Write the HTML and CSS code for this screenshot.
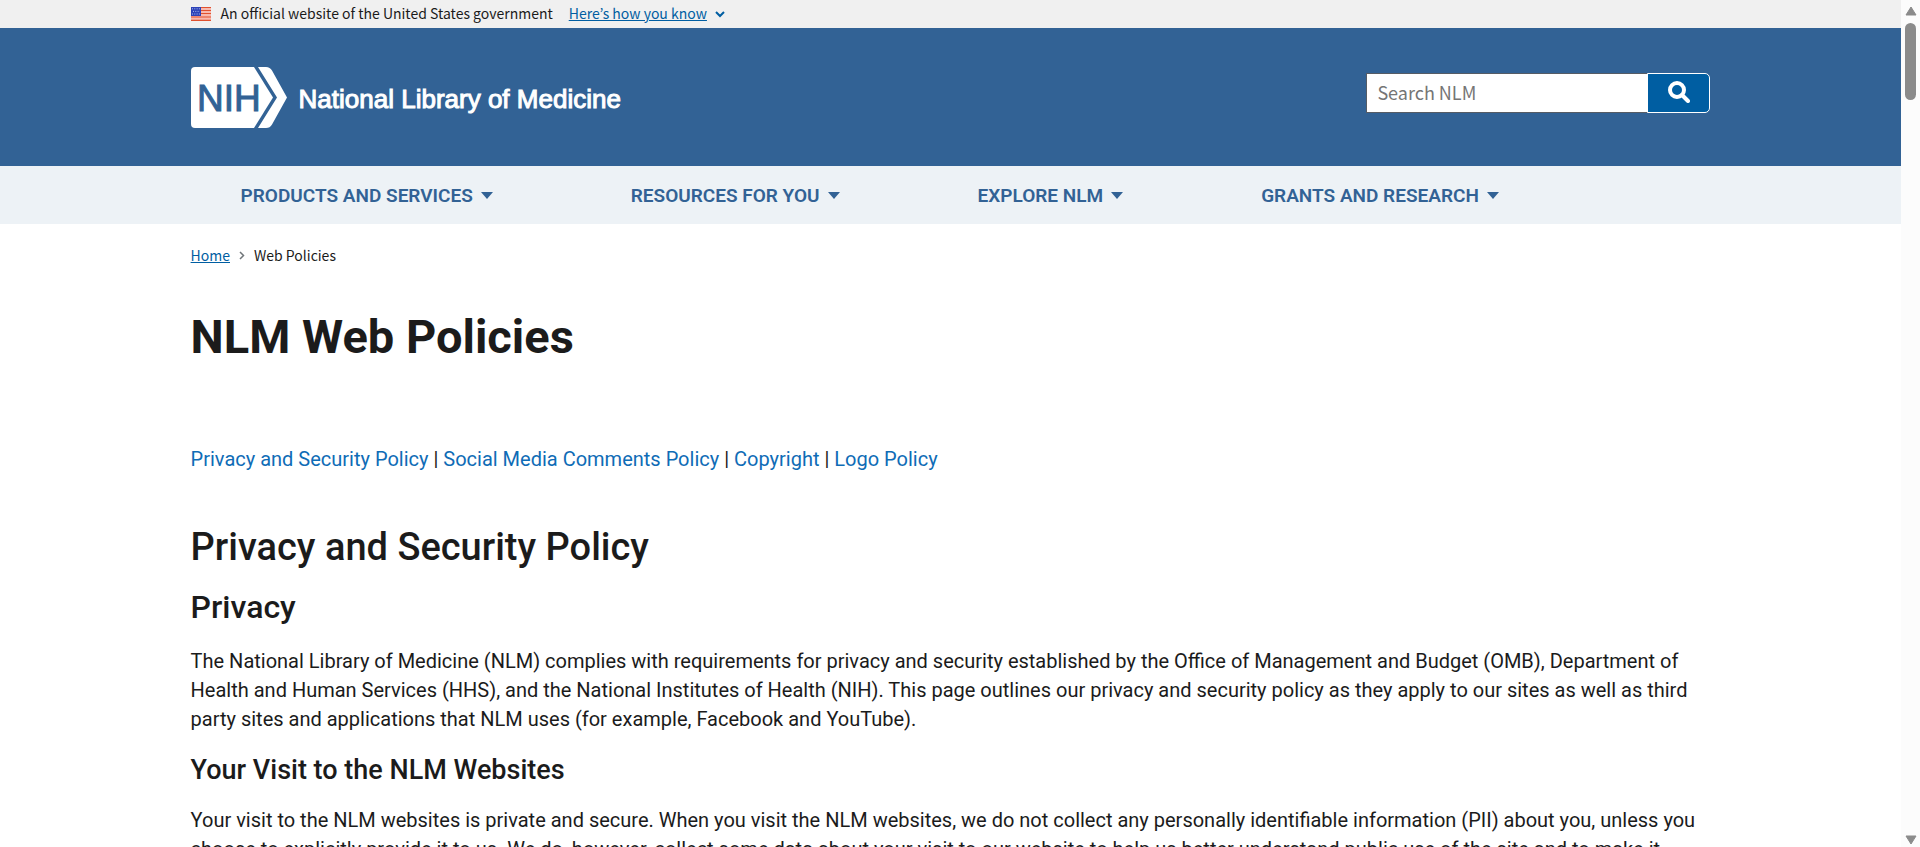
FILE: index.html
```html
<!DOCTYPE html>
<html lang="en">
<head>
<meta charset="utf-8">
<title>NLM Web Policies</title>
<link rel="stylesheet" href="styles.css">
</head>
<body>
<div class="page">
  <section class="gov-banner" aria-label="Official government website">
    <div class="container gov-banner-inner">
      <svg class="flag" viewBox="0 0 20 14" aria-hidden="true">
        <rect width="20" height="14" fill="#f8b9ae"/>
        <path d="M0 .5h20M0 3.5h20M0 6.5h20M0 10h20M0 13.3h20" stroke="#e0512f" stroke-width="1.2"/>
        <rect width="10" height="9" fill="#2d43b8"/>
        <path d="M1 1.8h8M2 4.4h7M1 7h8" stroke="#a9b6ee" stroke-width="1" stroke-dasharray="1 1.3"/>
      </svg>
      <span class="gov-text">An official website of the United States government</span>
      <button type="button" class="gov-toggle"><span class="gov-label">Here’s how you know</span>
        <svg class="chevron" viewBox="0 0 10 7" aria-hidden="true"><path d="M1 1l4 4 4-4"/></svg>
      </button>
    </div>
  </section>

  <header class="header">
    <div class="container header-inner">
      <a class="logo" href="#" aria-label="NIH National Library of Medicine">
        <svg class="logo-mark" viewBox="0 0 98 61" aria-hidden="true">
          <path d="M4 0H63L82 30.500 63 61H4Q0 61 0 57V4Q0 0 4 0Z" fill="#fff"/>
          <path d="M67 0H75Q79 0 81 3.500L96 30.500 81 57.500Q79 61 75 61H67L86 30.500Z" fill="#fff"/>
          <text x="6" y="44" class="logo-nih">NIH</text>
        </svg>
        <span class="logo-name">National Library of Medicine</span>
      </a>
      <form class="search" role="search">
        <input class="search-input" type="search" placeholder="Search NLM" aria-label="Search NLM">
        <button class="search-button" type="submit" aria-label="Search">
          <svg class="search-icon" viewBox="0 0 22 22" aria-hidden="true"><circle cx="9" cy="9" r="7"/><path d="M14 14l6 6"/></svg>
        </button>
      </form>
    </div>
  </header>

  <nav class="nav" aria-label="Primary">
    <div class="container nav-inner">
      <button type="button" class="nav-item">PRODUCTS AND SERVICES<span class="caret"></span></button>
      <button type="button" class="nav-item">RESOURCES FOR YOU<span class="caret"></span></button>
      <button type="button" class="nav-item">EXPLORE NLM<span class="caret"></span></button>
      <button type="button" class="nav-item">GRANTS AND RESEARCH<span class="caret"></span></button>
    </div>
  </nav>

  <main class="container">
    <nav class="breadcrumb" aria-label="Breadcrumb">
      <a href="#">Home</a>
      <svg class="crumb-sep" viewBox="0 0 6 9" aria-hidden="true"><path d="M1 1l3.500 3.500L1 8"/></svg>
      <span>Web Policies</span>
    </nav>
    <h1 class="title">NLM Web Policies</h1>
    <p class="jump"><a href="#privacy">Privacy and Security Policy</a> | <a href="#social">Social Media Comments Policy</a> | <a href="#copyright">Copyright</a> | <a href="#logo">Logo Policy</a></p>
    <h2 class="section-title" id="privacy">Privacy and Security Policy</h2>
    <h3 class="subtitle">Privacy</h3>
    <p class="text">The National Library of Medicine (NLM) complies with requirements for privacy and security established by the Office of Management and Budget (OMB), Department of Health and Human Services (HHS), and the National Institutes of Health (NIH). This page outlines our privacy and security policy as they apply to our sites as well as third party sites and applications that NLM uses (for example, Facebook and YouTube).</p>
    <h4 class="topic">Your Visit to the NLM Websites</h4>
    <p class="text">Your visit to the NLM websites is private and secure. When you visit the NLM websites, we do not collect any personally identifiable information (PII) about you, unless you choose to explicitly provide it to us. We do, however, collect some data about your visit to our website to help us better understand public use of the site and to make it</p>
  </main>
</div>
<div class="scrollbar" aria-hidden="true">
  <svg class="arrow" viewBox="0 0 12 10"><path d="M6 1L11 9H1Z"/></svg>
  <div class="thumb"></div>
  <svg class="arrow arrow-down" viewBox="0 0 12 10"><path d="M1 1H11L6 9Z"/></svg>
</div>
</body>
</html>
```
FILE: styles.css
```css
* { box-sizing: border-box; }
body {
  margin: 0;
  height: 100vh;
  overflow: hidden;
  background: #fff;
  color: #1b1b1b;
  font-family: Roboto, sans-serif;
  font-size: 20px;
  line-height: 29px;
}
button { font: inherit; border: 0; background: none; padding: 0; cursor: pointer; }
.page { margin-right: 19px; }
.container { width: calc(80% - 1px); margin: 0 auto; }

.gov-banner, .breadcrumb { font-family: "Noto Sans CJK KR", sans-serif; font-size: 14px; }
.gov-banner { background: #f0f0f0; }
.gov-banner-inner { display: flex; align-items: center; height: 28px; }
.gov-banner-inner, .gov-toggle { line-height: 26px; }
.gov-text, .gov-label { padding-bottom: 2px; }
.flag { width: 20px; height: 14px; margin-right: 10px; }
.gov-toggle { display: flex; align-items: center; gap: 8px; margin-left: 16px; color: #005ea2; }
.gov-label { text-decoration: underline; }
.chevron { width: 10px; height: 7px; fill: none; stroke: #005ea2; stroke-width: 2; }

.header { background: #326295; }
.header-inner { display: flex; justify-content: space-between; align-items: flex-start; height: 138px; padding-top: 39px; }
.logo { display: flex; gap: 10px; text-decoration: none; color: #fff; }
.logo-mark { width: 98px; height: 61px; }
.logo-nih { font: 37px "Liberation Sans", sans-serif; fill: #326295; stroke: #326295; stroke-width: 1; }
.logo-name { font: 26px/32px "Liberation Sans", sans-serif; padding-top: 16px; -webkit-text-stroke: 1px #fff; }
.search { display: flex; height: 40px; margin-top: 6px; }
.search-input {
  width: 281px; height: 40px; padding: 0 10px 2px;
  border: 1px solid #565c65; border-right: 0; border-radius: 0;
  background: #fff; color: #1b1b1b;
  font-family: "Noto Sans CJK KR", sans-serif; font-size: 18px;
}
.search-input::placeholder { color: #757575; }
.search-button { width: 63px; height: 40px; display: flex; align-items: center; justify-content: center; padding-bottom: 2px; background: #005ea2; border: 1px solid #fff; border-radius: 0 5px 5px 0; }
.search-icon { width: 22px; height: 22px; fill: none; stroke: #fff; stroke-width: 4; stroke-linecap: round; }

.nav { background: #edf2f6; }
.nav-inner { display: flex; gap: 138px; height: 58px; padding-left: 50px; }
.nav-item { display: flex; align-items: center; gap: 8px; color: #326295; font-size: 19px; font-weight: 600; white-space: nowrap; }
.caret { border: 6px solid transparent; border-top: 7px solid #326295; border-bottom: 0; }

.breadcrumb { display: flex; align-items: center; gap: 9px; padding-top: 17px; }
.breadcrumb a { color: #005ea2; }
.crumb-sep { width: 6px; height: 9px; fill: none; stroke: #71767a; stroke-width: 1.500; }
.title { margin: 39px 0 0; font-size: 47px; line-height: 56px; font-weight: 700; }
.jump { margin: 80px 0 0; }
.jump a { color: #0f6cb6; text-decoration: none; }
.section-title { margin: 50px 0 0; font-size: 38px; line-height: 46px; font-weight: 500; }
.subtitle { margin: 18px 0 0; font-size: 32px; line-height: 39px; font-weight: 500; }
.text { margin: 20px 0 0; }
.topic { margin: 20px 0 0; font-size: 27px; line-height: 32px; font-weight: 500; }

.scrollbar { position: fixed; top: 0; right: 0; bottom: 0; width: 19px; padding: 6px 0 2px; display: flex; flex-direction: column; align-items: center; gap: 7px; background: #fcfcfc; }
.arrow { width: 12px; height: 10px; fill: #8b8b8b; stroke: #8b8b8b; stroke-linejoin: round; }
.arrow-down { margin-top: auto; }
.thumb { width: 11px; height: 77px; border-radius: 6px; background: #8b8b8b; }
```
